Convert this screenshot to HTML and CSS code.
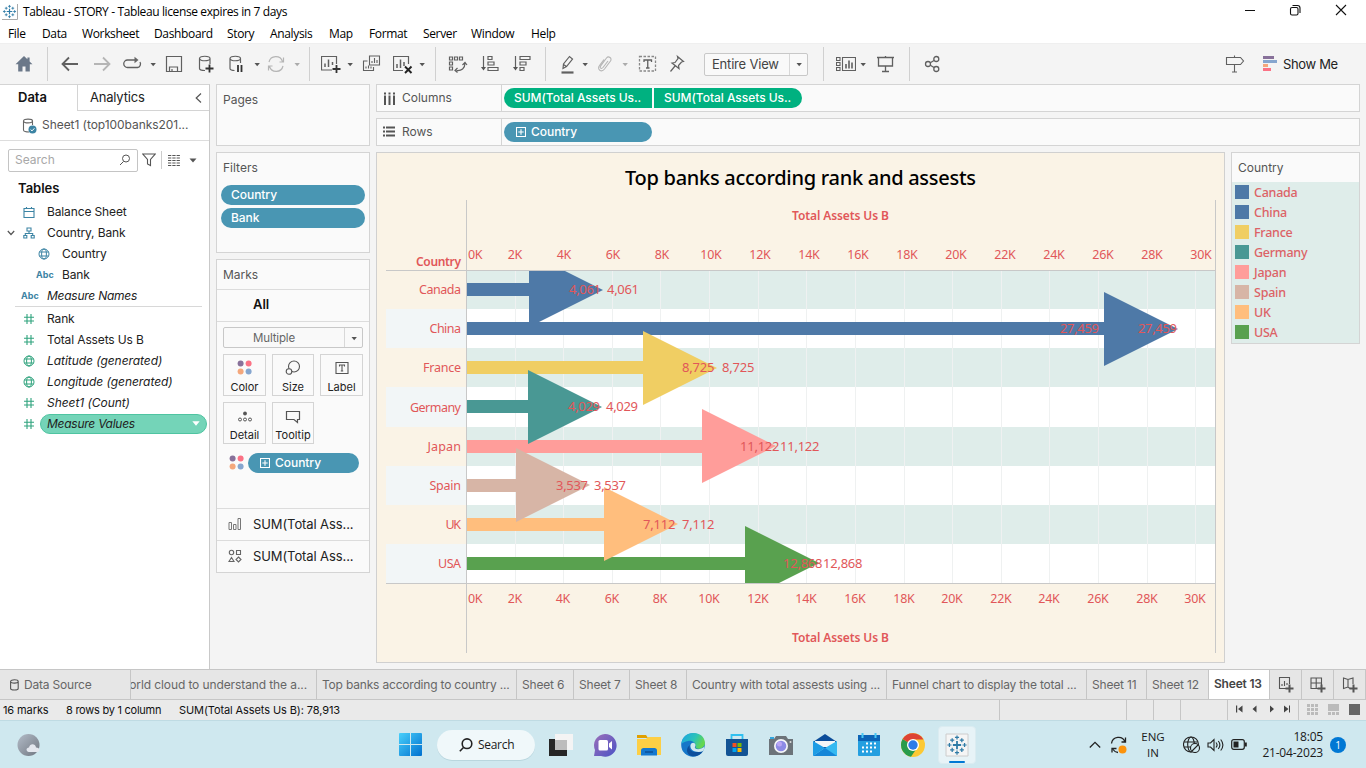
FILE: index.html
```html
<!DOCTYPE html>
<html lang="en">
<head>
<meta charset="utf-8">
<title>Tableau - STORY</title>
<link rel="stylesheet" href="styles.css">
</head>
<body>
<svg class="defs" width="0" height="0">
  <symbol id="caret" viewBox="0 0 10 20"><path d="M2.500 9h5.400l-2.700 3.200z" fill="#555"/></symbol>
  <symbol id="globe" viewBox="0 0 12 12"><g fill="none" stroke="currentColor"><circle cx="6" cy="6" r="5"/><ellipse cx="6" cy="6" rx="2.400" ry="5"/><path d="M1.500 4h9M1.500 8h9"/></g></symbol>
  <symbol id="hash" viewBox="0 0 12 12"><path d="M4 1v10M8 1v10M1 4.200h10M1 8h10" fill="none" stroke="currentColor" stroke-width="1.100"/></symbol>
  <symbol id="expand" viewBox="0 0 10 10"><path d="M.5.500h9v9h-9zM5 2.300v5.400M2.300 5h5.400" fill="none" stroke="#fff" stroke-width="1.100"/></symbol>
  <symbol id="dots" viewBox="0 0 16 16"><circle cx="3.600" cy="3.600" r="3" fill="#88719a"/><circle cx="11.600" cy="3.600" r="3" fill="#fb7285"/><circle cx="3.600" cy="11.600" r="3" fill="#f4a77c"/><circle cx="11.600" cy="11.600" r="3" fill="#86a6cf"/></symbol>
  <symbol id="logo" viewBox="0 0 16 16"><g stroke="#2f7ba6" fill="none"><path d="M8 5v6M5 8h6" stroke-width="1.300"/><path d="M8 1v3M6.500 2.500h3M8 12v3M6.500 13.500h3M1 8h3M2.500 6.500v3M12 8h3M13.500 6.500v3M4.500 3v3M3 4.500h3M11.500 3v3M10 4.500h3M4.500 10v3M3 11.500h3M11.500 10v3M10 11.500h3" stroke-width=".9"/></g></symbol>
</svg>

<header class="titlebar">
  <svg class="app-logo" viewBox="0 0 16 16"><path d="M15.500 0v15.500H0" fill="none" stroke="#aaa"/><use href="#logo" width="15" height="15"/></svg>
  <span class="app-title">Tableau - STORY - Tableau license expires in 7 days</span>
  <svg class="win-buttons" viewBox="0 0 104 12" fill="none" stroke="#111" stroke-width="1.100"><path d="M0 6.500h10M91 1l10 10M101 1l-10 10"/><rect x="45.500" y="3.500" width="7.500" height="7.500" rx="1.500"/><path d="M47.500 1.500h5a2.500 2.500 0 0 1 2.500 2.500v5"/></svg>
</header>
<nav class="menubar"><span class="mi-file">File</span><span class="mi-data">Data</span><span class="mi-worksheet">Worksheet</span><span class="mi-dash">Dashboard</span><span class="mi-story">Story</span><span class="mi-analysis">Analysis</span><span class="mi-map">Map</span><span class="mi-format">Format</span><span class="mi-server">Server</span><span class="mi-window">Window</span><span>Help</span></nav>

<div class="toolbar">
  <svg class="ic m14" viewBox="0 0 20 20"><path d="M10 2L1.500 10.300h2.700V17.500h4.300v-5h3v5h4.300v-7.200h2.700L15.600 7.500V3.500h-2.200v1.800z" fill="#6b7889"/></svg>
  <i class="sep m13"></i>
  <svg class="ic m12 s" viewBox="0 0 20 20"><path d="M2.500 10H18M9 3.500L2.500 10 9 16.500" stroke-width="1.800"/></svg>
  <svg class="ic m12 s off" viewBox="0 0 20 20"><path d="M2 10h15.500M11 3.500l6.500 6.500-6.500 6.500" stroke-width="1.800"/></svg>
  <svg class="ic m10 s" viewBox="0 0 20 20"><path d="M14.500 6H5.500a3.700 3.700 0 0 0 0 7.500h10a3.700 3.700 0 0 0 2.500-5.500" stroke-width="1.300"/><path d="M12.500 2.800L16.500 6l-4 3.200z" fill="#666" stroke="none"/></svg>
  <svg class="ct m6"><use href="#caret"/></svg>
  <svg class="ic m6 s" viewBox="0 0 20 20"><path d="M2.500 2.500h15v15h-15zM5.500 17.500v-4.500h8v4.500M8 17v-2" stroke-width="1.200"/></svg>
  <svg class="ic m12 s" viewBox="0 0 20 20"><path d="M9 16.500c-3 0-5.500-.8-5.500-2V4.500M14 4.500V10M3.500 4.500c0-3 10.500-3 10.500 0s-10.500 3-10.500 0z" stroke-width="1.200"/><path d="M13.500 10.500v8M9.500 14.500h8" stroke="#333" stroke-width="1.800"/></svg>
  <svg class="ic m10 s" viewBox="0 0 20 20"><path d="M8.500 16.500c-2.500 0-4.500-.8-4.500-2V4.500M14.500 4.500V9M4 4.500c0-3 10.500-3 10.500 0s-10.500 3-10.500 0z" stroke-width="1.200"/><path d="M12 11v7M15.500 11v7" stroke="#333" stroke-width="1.800"/></svg>
  <svg class="ct m6"><use href="#caret"/></svg>
  <svg class="ic m4 s off" viewBox="0 0 20 20"><path d="M3 8a7 7 0 0 1 13.500-.5M17 12a7 7 0 0 1-13.500.5M17.500 3.500v4.500h-4M2.500 16.500V12h4" stroke-width="1.200"/></svg>
  <svg class="ct m6 dim"><use href="#caret"/></svg>
  <i class="sep m7"></i>
  <svg class="ic m11 s" viewBox="0 0 20 20"><path d="M11 16H.500V2.500h15V10" stroke-width="1.200"/><path d="M4 13V9.500M7.500 13V5.500M11.500 11V8" stroke-width="1.500"/><path d="M15.500 11v8M11.500 15h8" stroke="#333" stroke-width="1.800"/></svg>
  <svg class="ct m4"><use href="#caret"/></svg>
  <svg class="ic m7 s" viewBox="0 0 20 20"><path d="M7.500 2h10v9h-10zM5.500 7H1.500v9.500h10V13M10 9V7M12.500 9V4M15 9V6M4 14.500v-2M6.500 14.500v-3M9 14.500v-2" stroke-width="1.100"/></svg>
  <svg class="ic m11 s" viewBox="0 0 20 20"><path d="M10 16.500H.500v-14h15V10" stroke-width="1.200"/><path d="M4 14v-4M7.500 14V5.500M11 12V8" stroke-width="1.500"/><path d="M12 12.500l6.500 6.500M18.500 12.500L12 19" stroke="#222" stroke-width="1.900"/></svg>
  <svg class="ct m4"><use href="#caret"/></svg>
  <i class="sep m8"></i>
  <svg class="ic m12 s" viewBox="0 0 20 20"><path d="M1.500 3h3v3h-3zM6.500 3h3v3h-3zM11.500 3h3v3h-3zM1.500 8h3v3h-3zM1.500 13h3v3h-3zM8.500 16.500c5 .5 8.500-2 8.500-7.500M9.500 14l-2.500 2.500 2.500 2M14.500 11L17 8.500l2 2.500" stroke-width="1.200"/></svg>
  <svg class="ic m12 s" viewBox="0 0 20 20"><path d="M3.500 2v12.500M8 2.500h4v3H8zM8 8h6v3H8zM8 13.500h10v3H8z" stroke-width="1.200"/><path d="M1 13h5l-2.500 3.500z" fill="#555" stroke="none"/></svg>
  <svg class="ic m12 s" viewBox="0 0 20 20"><path d="M3.500 2v12.500M8 2.500h10v3H8zM8 8h6v3H8zM8 13.500h4v3H8z" stroke-width="1.200"/><path d="M1 13h5l-2.500 3.500z" fill="#555" stroke="none"/></svg>
  <i class="sep m13"></i>
  <svg class="ic m12 s" viewBox="0 0 20 20"><path d="M5 14.500l.5-4.500 6-7.500 3 2.500-6 7.500zM5.500 10.500l3 2" stroke-width="1.200"/><path d="M3.500 18.500h12" stroke-width="2.200"/></svg>
  <svg class="ct m2"><use href="#caret"/></svg>
  <svg class="ic m5 s off" viewBox="0 0 20 20"><path d="M13 7l-5 6.500c-1.800 2-3.800.3-2.300-1.700L11.500 4c2-2.500 6 .2 4 3l-6 8c-3 3.800-8 .5-5-3.500L9 5.500" stroke-width="1.100"/></svg>
  <svg class="ct m5 dim"><use href="#caret"/></svg>
  <svg class="ic m8 s" viewBox="0 0 20 20"><rect x="1.500" y="2.500" width="16" height="14.500" stroke="#888" stroke-dasharray="2.500 1.500"/><path d="M6 8V6h7.500v2M9.750 6v8M8 14h3.500" stroke-width="1.300"/></svg>
  <svg class="ic m10 s" viewBox="0 0 20 20"><path d="M9.500 2.500l6 5-2 .5-3 3.500.5 3-7-5.500 3-.5 3-4zM7 12l-4.500 5.500" stroke-width="1.200"/></svg>
  <div class="select view-select m16"><span>Entire View</span><b><svg class="ct"><use href="#caret"/></svg></b></div>
  <i class="sep m15"></i>
  <svg class="ic m12 s" viewBox="0 0 20 20"><path d="M6.500 3.500h13v13h-13zM.500 3.500h3.500v3H.500zM.500 8.500h3.500v3H.500zM.500 13.500h3.500v3H.500z" stroke-width="1.100"/><path d="M10 14.500V10M13 14.500V6.500M16 14.500V8.500" stroke-width="1.600"/></svg>
  <svg class="ct m2"><use href="#caret"/></svg>
  <svg class="ic m8 s" viewBox="0 0 20 20"><path d="M1 3.500h17M2.500 3.500v8.500h14V3.500M9.500 12v5.500M6 17.500h7M9.500 2v1.500" stroke-width="1.300"/></svg>
  <i class="sep m13"></i>
  <svg class="ic m12 s" viewBox="0 0 20 20"><circle cx="6" cy="10" r="2.500"/><circle cx="14.300" cy="5" r="2.500"/><circle cx="14.300" cy="15" r="2.500"/><path d="M8.300 8.800l3.700-2.300M8.300 11.200l3.700 2.300" stroke-width="1.300"/></svg>
  <div class="grow"></div>
  <svg class="ic s" viewBox="0 0 20 20"><path d="M1.500 3.500h14l3 3.500-3 3.500h-14zM9.500 1.500v2M9.500 10.500V18M7 18h5" stroke-width="1.100"/></svg>
  <svg class="showme-ic" viewBox="0 0 14 16"><path fill="#88719a" d="M0 0h11v3H0z"/><path fill="#86a6cf" d="M0 4h14v3H0z"/><path fill="#f4a77c" d="M0 8h5v3H0z"/><path fill="#fb7285" d="M0 12h8v3H0z"/></svg>
  <span class="showme">Show Me</span>
</div>

<main class="work">
  <aside class="data-pane">
    <div class="pane-tabs"><div class="pt on">Data</div><div class="pt off-tab"><span>Analytics</span><svg width="7" height="10" viewBox="0 0 7 10"><path d="M6 .5L1.200 5 6 9.500" fill="none" stroke="#555" stroke-width="1.200"/></svg></div></div>
    <div class="source"><svg width="16" height="16" viewBox="0 0 16 16"><path d="M7 14c-3 0-5.500-.6-5.500-2V3c0-2.500 9-2.500 9 0s-9 2.500-9 0M10.500 3v4" fill="none" stroke="#666" stroke-width="1.100"/><circle cx="10.500" cy="11.500" r="4" fill="#3c84a4"/><path d="M8.600 11.500l1.400 1.400 2.400-2.600" fill="none" stroke="#fff"/></svg><span>Sheet1 (top100banks201...</span></div>
    <div class="search-row">
      <div class="search"><span>Search</span><svg width="12" height="12" viewBox="0 0 12 12" fill="none" stroke="#555"><circle cx="7" cy="4.500" r="3.500"/><path d="M4.500 7.500L1 11"/></svg></div>
      <svg class="funnel" width="14" height="14" viewBox="0 0 14 14"><path d="M.8 1h12.400L8.500 6.500v6l-3-1.500V6.500z" fill="none" stroke="#555" stroke-width="1.100"/></svg>
      <i></i>
      <svg width="13" height="11" viewBox="0 0 13 11"><path d="M0 .5h12M0 3h12M0 5.500h12M0 8h12M0 10.500h12" stroke="#555" stroke-width="1" stroke-dasharray="3.300 1"/></svg>
      <svg class="bigcaret" width="8" height="5" viewBox="0 0 8 5"><path d="M.5.500h7L4 4.500z" fill="#555"/></svg>
    </div>
    <h2>Tables</h2>
    <ul class="fields blue">
      <li><svg class="fi" viewBox="0 0 12 12"><path d="M1 2.500h10v9H1zM1 5.500h10M3.500 1v2M8.500 1v2" fill="none" stroke="currentColor" stroke-width="1.100"/></svg><span>Balance Sheet</span></li>
      <li class="tree"><svg class="chev" viewBox="0 0 8 6"><path d="M.8 1l3.200 3.500L7.200 1" fill="none" stroke="#555" stroke-width="1.200"/></svg><svg class="fi" viewBox="0 0 12 12"><path d="M4 1h4v3H4zM.8 8.500h3v2.500h-3zM8.200 8.500h3v2.500h-3zM6 4v2.500M2.300 8.500v-2h7.400v2" fill="none" stroke="currentColor" stroke-width="1.100"/></svg><span>Country, Bank</span></li>
      <li class="in"><svg class="fi"><use href="#globe"/></svg><span>Country</span></li>
      <li class="in"><b class="abc">Abc</b><span>Bank</span></li>
      <li><b class="abc">Abc</b><em class="narrow">Measure Names</em></li>
    </ul>
    <ul class="fields green">
      <li><svg class="fi"><use href="#hash"/></svg><span>Rank</span></li>
      <li><svg class="fi"><use href="#hash"/></svg><span>Total Assets Us B</span></li>
      <li><svg class="fi"><use href="#globe"/></svg><em>Latitude (generated)</em></li>
      <li><svg class="fi"><use href="#globe"/></svg><em>Longitude (generated)</em></li>
      <li><svg class="fi"><use href="#hash"/></svg><em>Sheet1 (Count)</em></li>
      <li><svg class="fi"><use href="#hash"/></svg><div class="selected"><em class="narrow">Measure Values</em><svg width="8" height="5" viewBox="0 0 8 5"><path d="M.3.300h7.400L4 4.700z" fill="#fff"/></svg></div></li>
    </ul>
  </aside>

  <section class="shelves">
    <div class="card pages"><h3>Pages</h3></div>
    <div class="card filters"><h3>Filters</h3><div class="pill">Country</div><div class="pill">Bank</div></div>
    <div class="card marks">
      <h3>Marks</h3>
      <div class="mark-all">All</div>
      <div class="mark-body">
        <div class="select type-select"><span>Multiple</span><b><svg class="ct"><use href="#caret"/></svg></b></div>
        <div class="mark-grid">
          <div><svg width="16" height="16"><use href="#dots"/></svg>Color</div>
          <div><svg width="16" height="16" viewBox="0 0 16 16" fill="none" stroke="#555" stroke-width="1.100"><circle cx="9" cy="6.500" r="5.500"/><circle cx="4" cy="11.500" r="2.800" fill="#fafafa"/></svg>Size</div>
          <div><svg width="16" height="16" viewBox="0 0 16 16" fill="none" stroke="#555" stroke-width="1.100"><path d="M2 2.500h12v11H2zM5.500 6.500V5h5v1.500M8 5v6M6.800 11h2.400"/></svg>Label</div>
          <div><svg width="16" height="16" viewBox="0 0 16 16" fill="none" stroke="#555"><circle cx="8" cy="5.500" r="1.900" fill="#555" stroke="none"/><circle cx="3" cy="11.500" r="1.500"/><circle cx="8" cy="11.500" r="1.500"/><circle cx="13" cy="11.500" r="1.500"/></svg>Detail</div>
          <div><svg width="16" height="16" viewBox="0 0 16 16" fill="none" stroke="#555" stroke-width="1.200"><path d="M1.500 3.500h13v8h-2V14.500L9 11.500H1.500z"/></svg>Tooltip</div>
        </div>
        <div class="mark-pill"><svg width="16" height="16"><use href="#dots"/></svg><div class="pill"><svg class="ex"><use href="#expand"/></svg>Country</div></div>
      </div>
      <div class="mark-row"><svg width="14" height="14" viewBox="0 0 14 14" fill="none" stroke="#777"><path d="M1 5.500h2.500v7H1zM5.500 7.500H8v5H5.500zM10 1.500h2.500v11H10z"/></svg><span>SUM(Total Ass...</span></div>
      <div class="mark-row"><svg width="14" height="14" viewBox="0 0 14 14" fill="none" stroke="#666" stroke-width="1.100"><circle cx="3.500" cy="3.500" r="2.200"/><path d="M8.500 1.500h4v4h-4zM1 12.500h5L3.500 8.500zM10.500 8l2.500 2.500-2.500 2.500L8 10.500z"/></svg><span>SUM(Total Ass...</span></div>
    </div>
  </section>

  <section class="canvas">
    <div class="card shelf"><div class="shelf-name"><svg width="12" height="13" viewBox="0 0 12 13" stroke="#555" stroke-width="2"><path d="M2 3.500V13M6.500 3.500V13M11 3.500V13M2 .5v2M6.500 .5v2M11 .5v2"/></svg><span>Columns</span></div><div class="pill green l">SUM(Total Assets Us..</div><div class="pill green r">SUM(Total Assets Us..</div></div>
    <div class="card shelf"><div class="shelf-name"><svg width="12" height="13" viewBox="0 0 12 13" stroke="#555" stroke-width="1.800"><path d="M0 1.500h2M0 5.500h2M0 9.500h2M3 1.500h9M3 5.500h9M3 9.500h9"/></svg><span>Rows</span></div><div class="pill"><svg class="ex"><use href="#expand"/></svg>Country</div></div>
    <div class="view">
      <div class="viz"><svg id="chart" width="847" height="509" viewBox="377 153 847 509"></svg></div>
      <div class="card legend"><h3>Country</h3>
        <ul id="legend"></ul>
      </div>
    </div>
  </section>
</main>

<div class="tabs">
  <div class="tab t1"><svg width="9" height="12" viewBox="0 0 9 12" fill="none" stroke="#555" stroke-width="1.100"><path d="M.6 2.500v7c0 2 7.600 2 7.600 0v-7c0-2.300-7.600-2.300-7.600 0s7.600 2 7.600 0"/></svg><span>Data Source</span></div>
  <div class="tab t2"><span>World cloud to understand the a...</span></div>
  <div class="tab t3"><span>Top banks according to country ...</span></div>
  <div class="tab t4"><span>Sheet 6</span></div>
  <div class="tab t5"><span>Sheet 7</span></div>
  <div class="tab t6"><span>Sheet 8</span></div>
  <div class="tab t7"><span>Country with total assests using ...</span></div>
  <div class="tab t8"><span>Funnel chart to display the total ...</span></div>
  <div class="tab t9"><span>Sheet 11</span></div>
  <div class="tab t10"><span>Sheet 12</span></div>
  <div class="tab t11 active"><span>Sheet 13</span></div>
  <div class="tab add"><svg viewBox="0 0 16 16"><path d="M8 11.500H1.500v-11h10V7M4 9V7M6.500 9V4M9 8V6" /><path class="plus" d="M11.500 7.500v8M7.500 11.500h8"/></svg></div>
  <div class="tab add"><svg viewBox="0 0 16 16"><path d="M8 11.500H1V1h10.500v7M1 6h10.500M6.200 1v10.500"/><path class="plus" d="M11.500 7.500v8M7.500 11.500h8"/></svg></div>
  <div class="tab add"><svg viewBox="0 0 16 16"><path d="M8 11.500L6 10 1.500 11.500V1L6 2.500 11 1v6M6 2.500V10"/><path class="plus" d="M11.500 7.500v8M7.500 11.500h8"/></svg></div>
</div>
<div class="status">
  <span class="s1">16 marks</span><span class="s2">8 rows by 1 column</span><span class="s3">SUM(Total Assets Us B): 78,913</span>
  <div class="cells"><i class="c1"></i><i class="c2"></i><i class="c2"></i><i class="c3"></i>
    <div class="nav"><svg width="54" height="8" viewBox="0 0 54 8" fill="#444"><path d="M0 .5h1.200v7H0zM6.500.5v7L2 4zM20.500.5v7L16.500 4zM34 .5v7L38 4zM48 .5v7L52.500 4zM53 .5h1v7h-1z"/></svg></div>
    <div class="views"><svg width="54" height="12" viewBox="0 0 54 12"><path fill="#bbb" d="M0 0h3v3H0zM4 0h3v3H4zM8 0h3v3H8zM0 4h3v3H0zM4 4h3v3H4zM8 4h3v3H8zM0 8h3v3H0zM4 8h3v3H4zM8 8h3v3H8zM21 0h11v7H21zM21 8h3v3h-3zM25 8h3v3h-3zM29 8h3v3h-3z"/><path fill="#666" d="M42 0h11v11H42z"/></svg></div>
  </div>
</div>

<footer class="taskbar">
  <svg class="weather" width="24" height="24" viewBox="0 0 24 24"><defs><linearGradient id="moon" x1="0" y1="0" x2="1" y2="1"><stop offset="0" stop-color="#b3bcc8"/><stop offset="1" stop-color="#707680"/></linearGradient><linearGradient id="win" gradientUnits="userSpaceOnUse" x1="0" y1="0" x2="23" y2="23"><stop offset="0" stop-color="#48d0fb"/><stop offset="1" stop-color="#0070cf"/></linearGradient></defs><circle cx="11.500" cy="12" r="11" fill="url(#moon)"/><path d="M12 19c-3.500-.5-3-4.500 0-4.500 1-4.500 6.500-4 7 0 4.500 0 4.500 4.500 1 4.500z" fill="#e4e7ee"/></svg>
  <svg class="winlogo" width="24" height="24" viewBox="0 0 24 24"><path fill="url(#win)" d="M0 1a1 1 0 0 1 1-1h10v11H0zM12 0h10a1 1 0 0 1 1 1v10H12zM0 12h11v11H1a1 1 0 0 1-1-1zM12 12h11v10a1 1 0 0 1-1 1H12z"/></svg>
  <div class="tsearch"><svg width="14" height="14" viewBox="0 0 14 14" fill="none" stroke="#222" stroke-width="1.600"><circle cx="8" cy="5.700" r="4.800"/><path d="M4.500 9.500L.8 13.200"/></svg><span>Search</span></div>
  <div class="apps">
    <svg viewBox="0 0 24 24"><path d="M0 6h18v17H0z" fill="#262626"/><path d="M6 1h18v16H6z" fill="#f4f4f4"/><path d="M6 7h12v10H6z" fill="#bcbcbc"/></svg>
    <svg viewBox="0 0 24 24"><defs><linearGradient id="chat" x1="0" y1="0" x2="1" y2="1"><stop offset="0" stop-color="#9b6fb8"/><stop offset="1" stop-color="#4b53c6"/></linearGradient></defs><path d="M12 1a11.400 11.400 0 1 1-4 22H1l1-6A11.400 11.400 0 0 1 12 1z" fill="url(#chat)"/><rect x="5.500" y="7" width="9.500" height="10.500" rx="1.500" fill="#fff"/><path d="M16 10.500l3-2.500v8.500l-3-2.500z" fill="#fff"/></svg>
    <svg viewBox="0 0 24 24"><path d="M0 2h9l2 3h-11z" fill="#e0a000"/><path d="M0 6h9l2-2h13v18H0z" fill="#fdcf45"/><path d="M4 22.500v-5c0-1.500 1-2.500 2.500-2.500h11c1.500 0 2.500 1 2.500 2.500v5z" fill="#1478cf"/><path d="M8 19h8" stroke="#0b4f96" stroke-width="1.500"/></svg>
    <svg viewBox="0 0 24 24"><defs><linearGradient id="edge" x1="0" y1="0" x2="1" y2=".4"><stop offset="0" stop-color="#1aa4e6"/><stop offset=".6" stop-color="#2bc3b8"/><stop offset="1" stop-color="#64d750"/></linearGradient></defs><circle cx="12" cy="12" r="11.800" fill="#1577c9"/><path d="M.5 11C1-3.500 23.500-3.500 24 10c0 5-6.500 7-9.500 5 1.500-5-3.500-8.500-7.500-7-3 .5-5.500 1.500-6.500 3z" fill="url(#edge)"/><path d="M9 12c-2 4 2 9.500 13 6-4 7-15 7-16 0-.2-3 1.500-5 3-6z" fill="#0c4f9c"/><path d="M9.500 12c1-3 4.500-3 5 0 0 1.500-1 2-.5 3 1.500 2 6 1.500 9.500-1.500l-1 4.500c-6 2.500-14 0-13-6z" fill="#d1e8ef"/></svg>
    <svg viewBox="0 0 24 24"><path d="M6.500 7V2h11v5" fill="none" stroke="#2fc0f0" stroke-width="1.800"/><path d="M1 6h22v15a2 2 0 0 1-2 2H3a2 2 0 0 1-2-2z" fill="#135394"/><path fill="#f05022" d="M7.500 10h4v4h-4z"/><path fill="#7fba00" d="M12.500 10h4v4h-4z"/><path fill="#00a4ef" d="M7.500 15h4v4h-4z"/><path fill="#ffb900" d="M12.500 15h4v4h-4z"/></svg>
    <svg viewBox="0 0 24 24"><path d="M1 4h4v3H1z" fill="#32a5dd"/><path d="M0 6h5l2-3h10l2 3h5v16H0z" fill="#6c7379"/><circle cx="12" cy="13" r="7" fill="#f5f6f8"/><circle cx="12" cy="13" r="5.300" fill="#8d8be5"/><circle cx="10.500" cy="11" r="2.500" fill="#b9a5f4"/><circle cx="21.500" cy="9" r="1" fill="#ddd"/></svg>
    <svg viewBox="0 0 24 24"><path d="M0 9l12-8 12 8-12 7z" fill="#0b4c99"/><path d="M2 8h20v6H2z" fill="#f4f6f7"/><path d="M0 8l12 7-12 8z" fill="#1e9de5"/><path d="M24 8v15H0l12-8z" fill="#35b9f1"/><path d="M0 23l12-8 12 8z" fill="#1586d8"/></svg>
    <svg viewBox="0 0 24 24"><path d="M1 2h22v7H1z" fill="#0c64b6"/><path d="M1 8h22v14a1 1 0 0 1-1 1H2a1 1 0 0 1-1-1z" fill="#249fe0"/><path d="M5.500 0v5M18.500 0v5" stroke="#48c8f3" stroke-width="2"/><path d="M9 10.500h10M5 14.500h14M5 18.500h10" stroke="#fff" stroke-width="2" stroke-dasharray="2 2"/></svg>
    <svg viewBox="0 0 24 24"><circle cx="12" cy="12" r="12" fill="#fcc934"/><path d="M12 12L1.600 6a12 12 0 0 0 8.400 17.800L16 15z" fill="#289b4c"/><path d="M12 12L1.600 6A12 12 0 0 1 22.400 6.500H12z" fill="#dd4334"/><circle cx="12" cy="12" r="6" fill="#fff"/><circle cx="12" cy="12" r="4.700" fill="#2c7be8"/></svg>
  </div>
  <div class="running"><svg width="24" height="24" viewBox="0 0 24 24"><path d="M1 1h22v22H1z" fill="#f5f5f5" stroke="#ccc"/><use href="#logo" x="1" y="1" width="22" height="22"/></svg><i></i></div>
  <div class="tray">
    <svg class="up" width="12" height="8" viewBox="0 0 12 8"><path d="M.8 6.500L6 1.300l5.200 5.200" fill="none" stroke="#222" stroke-width="1.300"/></svg>
    <svg class="sync" width="18" height="18" viewBox="0 0 18 18" fill="none" stroke="#222" stroke-width="1.300"><path d="M1.500 7.500A7 7 0 0 1 15 6M15.500 1.500V6h-4M3 13.500a7 7 0 0 0 5 3M6.500 12.500H2v4"/><circle cx="12.500" cy="13.500" r="4" fill="#fc930c" stroke="none"/></svg>
    <div class="lang">ENG<br>IN</div>
    <svg class="net" width="17" height="17" viewBox="0 0 17 17" fill="none" stroke="#222" stroke-width="1.100"><circle cx="8" cy="8.500" r="7.500"/><ellipse cx="8" cy="8.500" rx="3.300" ry="7.500"/><path d="M1 6h14M1 11h7"/><circle cx="12" cy="12" r="4.500" fill="#cfe8ef"/><path d="M9 15l6-6"/></svg>
    <svg class="vol" width="17" height="14" viewBox="0 0 17 14" fill="none" stroke="#222" stroke-width="1.100"><path d="M1 5h2.500L7 1.500v11L3.500 9H1zM9 4.500c1.300 1.500 1.300 3.500 0 5M11.300 3c2 2.500 2 5.500 0 8M13.700 1.500c2.800 3.500 2.800 7.500 0 11"/></svg>
    <svg class="bat" width="16" height="11" viewBox="0 0 16 11"><rect x=".7" y=".7" width="12.600" height="9.600" rx="2" fill="none" stroke="#222" stroke-width="1.200"/><path d="M2.500 2.500h5v6h-5zM14 3.500h1.800v4H14z" fill="#222"/></svg>
    <div class="clock">18:05<br>21-04-2023</div>
    <div class="badge">1</div>
  </div>
</footer>
<script src="chart.js"></script>
</body>
</html>
```

FILE: styles.css
```css
* { box-sizing: border-box; margin: 0; padding: 0; }
body { width: 1366px; height: 768px; overflow: hidden; display: flex; flex-direction: column; background: #f4f4f4; color: #222; font: 12px/16px Inter, "Noto Sans", sans-serif; }
svg { display: block; flex: none; }
ul { list-style: none; }
.defs { position: absolute; }
.grow { flex: 1; }

.titlebar { height: 24px; background: #fff; display: flex; align-items: center; padding-left: 2px; font: 12px/16px "Open Sans", sans-serif; color: #000; }
.app-logo { width: 16px; height: 16px; }
.app-title { flex: 1; margin-left: 5px; letter-spacing: -.38px; }
.win-buttons { width: 104px; height: 12px; margin: 0 17px 4px 0; }
.menubar { height: 19px; background: #fff; display: flex; align-items: center; padding-left: 8px; font: 12px/16px "Open Sans", sans-serif; color: #000; letter-spacing: -.35px; }
.mi-file { width: 34px; } .mi-data { width: 40px; } .mi-worksheet { width: 72px; } .mi-dash { width: 73px; } .mi-story { width: 43px; } .mi-analysis { width: 59px; } .mi-map { width: 40px; } .mi-format { width: 54px; } .mi-server { width: 48px; } .mi-window { width: 60px; }

.toolbar { height: 41px; display: flex; align-items: center; background: #f4f4f4; border-top: 1px solid #efefef; }
.ic { width: 20px; height: 20px; }
.ct { width: 10px; height: 20px; }
.s { fill: none; stroke: #606060; stroke-width: 1.3; }
.off { stroke: #b5b5b5; }
.dim { opacity: .45; }
.sep { width: 1px; height: 34px; background: #d0d0d0; }
.m2 { margin-left: 2px; } .m4 { margin-left: 4px; } .m5 { margin-left: 5px; } .m6 { margin-left: 6px; } .m7 { margin-left: 7px; } .m8 { margin-left: 8px; } .m10 { margin-left: 10px; } .m11 { margin-left: 11px; } .m12 { margin-left: 12px; } .m13 { margin-left: 13px; } .m14 { margin-left: 14px; } .m15 { margin-left: 15px; } .m16 { margin-left: 16px; }
.select { display: flex; align-items: center; border: 1px solid #c8c8c8; border-radius: 2px; background: #f9f9f9; color: #555; }
.select span { flex: 1; }
.select b { align-self: stretch; display: flex; align-items: center; justify-content: center; border-left: 1px solid #d8d8d8; width: 18px; }
.view-select { width: 104px; height: 23px; font-size: 13px; color: #444; padding-left: 7px; white-space: nowrap; letter-spacing: -.2px; }
.view-select span { padding-bottom: 1px; }
.showme-ic { width: 14px; height: 16px; margin-left: 18px; }
.showme { width: 89px; padding-left: 6px; font-size: 13px; letter-spacing: -.35px; }

.work { height: 585px; display: flex; }
.data-pane { width: 210px; background: #fff; border-right: 1px solid #c9c9c9; border-top: 1px solid #d4d4d4; }
.pane-tabs { display: flex; height: 26px; font-size: 13px; }
.pt { line-height: 25px; }
.pt.on { width: 77px; padding-left: 18px; font-weight: 600; color: #111; }
.off-tab { flex: 1; border-left: 1px solid #d4d4d4; border-bottom: 1px solid #d4d4d4; padding: 0 7px 0 12px; display: flex; align-items: center; justify-content: space-between; letter-spacing: -.2px; }
.source { height: 30px; border-bottom: 1px solid #ddd; padding-left: 22px; display: flex; align-items: center; color: #555; }
.source span { margin-left: 4px; letter-spacing: -.05px; white-space: nowrap; padding-bottom: 2px; }
.search-row { height: 38px; padding-left: 8px; display: flex; align-items: center; }
.search { width: 130px; height: 23px; border: 1px solid #c4c4c4; border-radius: 2px; display: flex; align-items: center; justify-content: space-between; padding: 0 6px; color: #a8a8a8; }
.funnel { margin: 0 5px 0 4px; }
.search-row i { width: 1px; height: 18px; background: #ccc; margin-right: 6px; }
.bigcaret { margin-left: 8px; }
.data-pane h2 { font-size: 13px; line-height: 18px; font-weight: 600; color: #111; padding-left: 18px; margin-bottom: 4px; }
.fields { letter-spacing: -.13px; }
.fields li { height: 21px; display: flex; align-items: center; padding-left: 23px; white-space: nowrap; }
.fields span, .fields em { margin-left: 12px; }
.fields em { letter-spacing: -.05px; }
.fields .narrow { letter-spacing: -.25px; }
.fi { width: 12px; height: 12px; }
.fields .tree { padding-left: 7px; }
.chev { width: 8px; height: 6px; margin-right: 8px; }
.fields .in { padding-left: 38px; }
.abc { font-size: 9px; font-weight: 700; width: 14px; margin: 0 0 0 -2px; letter-spacing: 0; }
.blue svg, .blue .abc { color: #3c84a4; }
.green { margin: 0 2px 0 0; padding-top: 1px; }
.blue::after { content: ""; display: block; height: 1px; margin: 0 7px 0 15px; background: #d8d8d8; }
.green li > svg { color: #2fa37d; }
.selected { width: 167px; height: 20px; margin-left: 5px; border: 1px solid #4fc4a1; border-radius: 10px; background: #74d4b8; display: flex; align-items: center; justify-content: space-between; padding-right: 6px; }
.selected em { margin-left: 6px; }

.shelves { width: 154px; margin-left: 6px; display: flex; flex-direction: column; gap: 6px; }
.card { background: #fafafa; border: 1px solid #d4d4d4; }
.card h3 { font-size: 12px; font-weight: 400; line-height: 30px; color: #555; padding-left: 6px; }
.pages { height: 62px; }
.filters { height: 101px; }
.pill { height: 20px; border-radius: 10px; background: #4996b3; color: #fff; line-height: 20px; padding-left: 10px; display: flex; align-items: center; font-weight: 500; letter-spacing: -.04px; white-space: nowrap; }
.pill .ex { width: 10px; height: 10px; margin: 0 5px 0 2px; }
.filters .pill { margin: 0 4px 3px; }
.filters h3 { height: 32px; }
.marks { height: 314px; }
.mark-all { height: 33px; border: solid #dcdcdc; border-width: 1px 0; padding-left: 36px; line-height: 28px; font-size: 13px; font-weight: 600; color: #111; margin-top: -1px; }
.marks h3 { height: 30px; }
.mark-body { height: 186px; padding: 5px 6px 0; }
.type-select { height: 21px; font-size: 11.5px; color: #666; }
.type-select span { padding-left: 29px; letter-spacing: -.15px; }
.mark-grid { display: grid; grid-template-columns: 43px 42px 43px; gap: 6px; margin-top: 6px; }
.mark-grid div { height: 42px; border: 1px solid #d4d4d4; font-size: 11px; line-height: 14px; display: flex; flex-direction: column; align-items: center; padding-top: 5px; gap: 4px; }
.mark-pill { display: flex; align-items: center; padding-left: 6px; gap: 3px; margin-top: 9px; }
.mark-pill .pill { width: 111px; }
.mark-row { height: 32px; border-top: 1px solid #dcdcdc; display: flex; align-items: center; padding: 0 0 1px 11px; font-size: 13px; letter-spacing: -.1px; }
.mark-row span { margin-left: 11px; }

.canvas { width: 984px; margin-left: 6px; display: flex; flex-direction: column; gap: 6px; }
.shelf { height: 28px; display: flex; align-items: center; }
.shelf-name { width: 125px; height: 26px; border-right: 1px solid #d4d4d4; display: flex; align-items: center; padding-left: 6px; color: #555; margin-right: 2px; }
.shelf-name span { margin-left: 7px; }
.shelf .pill { width: 148px; }
.pill.green { background: #00b180; margin: 0; padding-top: 0; }
.pill.l { border-radius: 10px 0 0 10px; }
.pill.r { border-radius: 0 10px 10px 0; margin-left: 2px; }
.view { display: flex; gap: 6px; align-items: flex-start; }
.viz { width: 849px; height: 511px; border: 1px solid #d0d0d0; background: #faf3e6; }
.viz text { font-family: "Noto Sans", sans-serif; fill: #e15759; }
.viz .title { fill: #000; }
.legend { width: 129px; }
.legend h3 { line-height: 29px; height: 29px; }
.legend ul { background: #dfedea; height: 161px; font-family: "Noto Sans", sans-serif; font-size: 12.5px; font-weight: 500; letter-spacing: -.25px; color: #dc6266; }
.legend li { height: 20px; display: flex; align-items: center; padding-left: 3px; gap: 5px; }
.legend span { padding-top: 2px; }
.swatch { width: 14px; height: 14px; }

.tabs { height: 31px; border: solid #c6c6c6; border-width: 1px 0; background: #e6e6e6; display: flex; color: #666; letter-spacing: -.19px; }
.tab { border-right: 1px solid #c6c6c6; line-height: 29px; padding-left: 5px; white-space: nowrap; overflow: hidden; display: flex; align-items: center; }
.t1 { width: 131px; padding-left: 10px; } .t1 span { margin-left: 5px; }
.t2 { width: 186px; padding: 0 9px 0 0; justify-content: flex-end; letter-spacing: -.1px; }
.t3 { width: 200px; } .t4 { width: 57px; } .t5 { width: 56px; } .t6 { width: 57px; } .t7 { width: 200px; } .t8 { width: 200px; } .t9 { width: 60px; } .t10 { width: 62px; }
.t11 { width: 61px; } .active { background: #fff; color: #444; font-weight: 600; line-height: 27px; align-items: flex-start; }
.add { width: 32px; padding-left: 8px; }
.add svg { width: 16px; height: 16px; fill: none; stroke: #555; stroke-width: 1.1; }
.add .plus { stroke-width: 2; }
.status { height: 20px; background: #eaeaea; display: flex; align-items: center; font-size: 11px; color: #111; padding-left: 3px; white-space: nowrap; letter-spacing: -.1px; }
.s1 { width: 63px; } .s2 { width: 113px; letter-spacing: -.25px; } .s3 { flex: 1; }
.cells { display: flex; align-self: stretch; }
.cells > * { border-left: 1px solid #c6c6c6; }
.c1 { width: 127px; } .c2 { width: 27px; } .c3 { width: 47px; }
.nav { width: 71px; padding: 5px 0 0 8px; } .views { width: 68px; padding: 4px 0 0 8px; }

.taskbar { height: 48px; background: #cfe8ef; border-top: 1px solid #bfdbe3; display: flex; align-items: center; font-family: "Open Sans", sans-serif; color: #1b1b1b; }
.weather { margin-left: 17px; }
.winlogo { margin-left: 358px; }
.tsearch { margin-left: 14px; width: 98px; height: 30px; border-radius: 15px; background: #f0f8fa; display: flex; align-items: center; padding-left: 22px; gap: 5px; box-shadow: 0 1px 0 #b9d6de; letter-spacing: -.3px; }
.apps { display: flex; gap: 20px; margin-left: 14px; }
.apps svg { width: 24px; height: 24px; }
.running { margin-left: 13px; width: 38px; height: 38px; border-radius: 4px; background: #e7f3f7; border: 1px solid #dbecf1; display: flex; flex-direction: column; align-items: center; padding-top: 6px; gap: 4px; }
.running i { width: 16px; height: 3px; border-radius: 2px; background: #0078d4; }
.tray { flex: 1; display: flex; align-items: center; line-height: 16px; }
.up { margin-left: 113px; } .sync { margin-left: 9px; }
.lang { width: 28px; margin-left: 11px; text-align: center; font-size: 11.5px; }
.net { margin-left: 16px; } .vol { margin-left: 7px; } .bat { margin-left: 7px; }
.clock { width: 76px; text-align: right; font-size: 12px; letter-spacing: -.2px; white-space: nowrap; }
.badge { width: 16px; height: 16px; border-radius: 50%; background: #0078d4; color: #fff; font-size: 10px; text-align: center; margin-left: 7px; }
```

FILE: chart.js
```js
const rows = [
  { name: "Canada", color: "#4e79a7", base: 529, y: 290, label: "4,061", x: [569, 607], w: 32, nx: 419, by: 283, ty: 294 },
  { name: "China", color: "#4e79a7", base: 1104, y: 329, label: "27,459", x: [1060, 1138], w: 39, nx: 429.5, by: 322, ty: 333 },
  { name: "France", color: "#f0ce63", base: 643, y: 368, label: "8,725", x: [682, 722], w: 32.5, nx: 423, by: 361, ty: 372 },
  { name: "Germany", color: "#499894", base: 528, y: 407, label: "4,029", x: [568, 606], w: 32, nx: 410, by: 400, ty: 411, ny: 412 },
  { name: "Japan", color: "#ff9d9a", base: 702, y: 446, label: "11,122", x: [740, 780], w: 39.5, nx: 427.5, by: 440, ty: 451 },
  { name: "Spain", color: "#d7b5a6", base: 516, y: 485, label: "3,537", x: [556, 594], w: 32, nx: 429.5, by: 479, ty: 490 },
  { name: "UK", color: "#ffbe7d", base: 604, y: 524, label: "7,112", x: [643, 682], w: 32.5, nx: 445.5, by: 518, ty: 529 },
  { name: "USA", color: "#59a14f", base: 745, y: 563, label: "12,868", x: [783, 823], w: 39.5, nx: 438, by: 557, ty: 568 }
];
const edges = [271, 309, 348, 387, 427, 466, 505, 544, 583];
const rect = (x, y, w, h, fill) => `<rect x="${x}" y="${y}" width="${w}" height="${h}" fill="${fill}"/>`;
const text = (s, x, y, w, size, extra = "") => `<text x="${x}" y="${y}" textLength="${w}" font-size="${size}" ${extra}>${s}</text>`;

let out = text("Top banks according rank and assests", 625, 185, 351, 20, 'class="title" font-weight="500"');
out += text("Total Assets Us B", 792, 220, 97, 12, 'font-weight="600"');
out += text("Total Assets Us B", 792, 642, 97, 12, 'font-weight="600"');
out += text("Country", 416, 266, 45, 12, 'font-weight="600"');

rows.forEach((r, i) => {
  const h = edges[i + 1] - edges[i];
  if (i % 2) out += rect(386, edges[i], 80, h, "#f2f6f7");
  out += rect(467, edges[i], 748, h, i % 2 ? "#ffffff" : "#dfedea");
});
for (let k = 0; k <= 15; k++) {
  const grid = Math.round(466 + 48.62 * k);
  if (k) out += rect(grid, 271, 1, 312, "#eff1f1");
  const w = k < 5 ? 14.5 : 21.5;
  out += text(`${k * 2}K`, k ? 466 + 49 * k - w / 2 : 468, 259, w, 12.5);
  out += text(`${k * 2}K`, k ? grid - w / 2 : 468, 603, w, 12.5);
}
out += rect(386, 270, 829, 1, "#c8c8c8") + rect(386, 583, 829, 1, "#c8c8c8");
out += rect(466, 200, 1, 453, "#c8c8c8") + rect(1215, 200, 1, 453, "#c8c8c8");
out += '<clipPath id="plot"><path d="M467 271h748v312H467z"/></clipPath><g clip-path="url(#plot)">';
rows.forEach(r => { out += rect(467, r.by, r.base - 466, 13, r.color); });
rows.forEach(r => { out += `<path d="M${r.base} ${r.y - 37}L${r.base + 74} ${r.y}L${r.base} ${r.y + 37}z" fill="${r.color}"/>`; });
out += "</g>";
rows.forEach(r => {
  out += text(r.name, r.nx, r.ny || r.ty, 461 - r.nx, 12.5);
  r.x.forEach(x => { out += text(r.label, x, r.ty, r.w, 13); });
});
document.getElementById("chart").innerHTML = out;
document.getElementById("legend").innerHTML = rows.map(r => `<li><i class="swatch" style="background:${r.color}"></i><span>${r.name}</span></li>`).join("");
```
